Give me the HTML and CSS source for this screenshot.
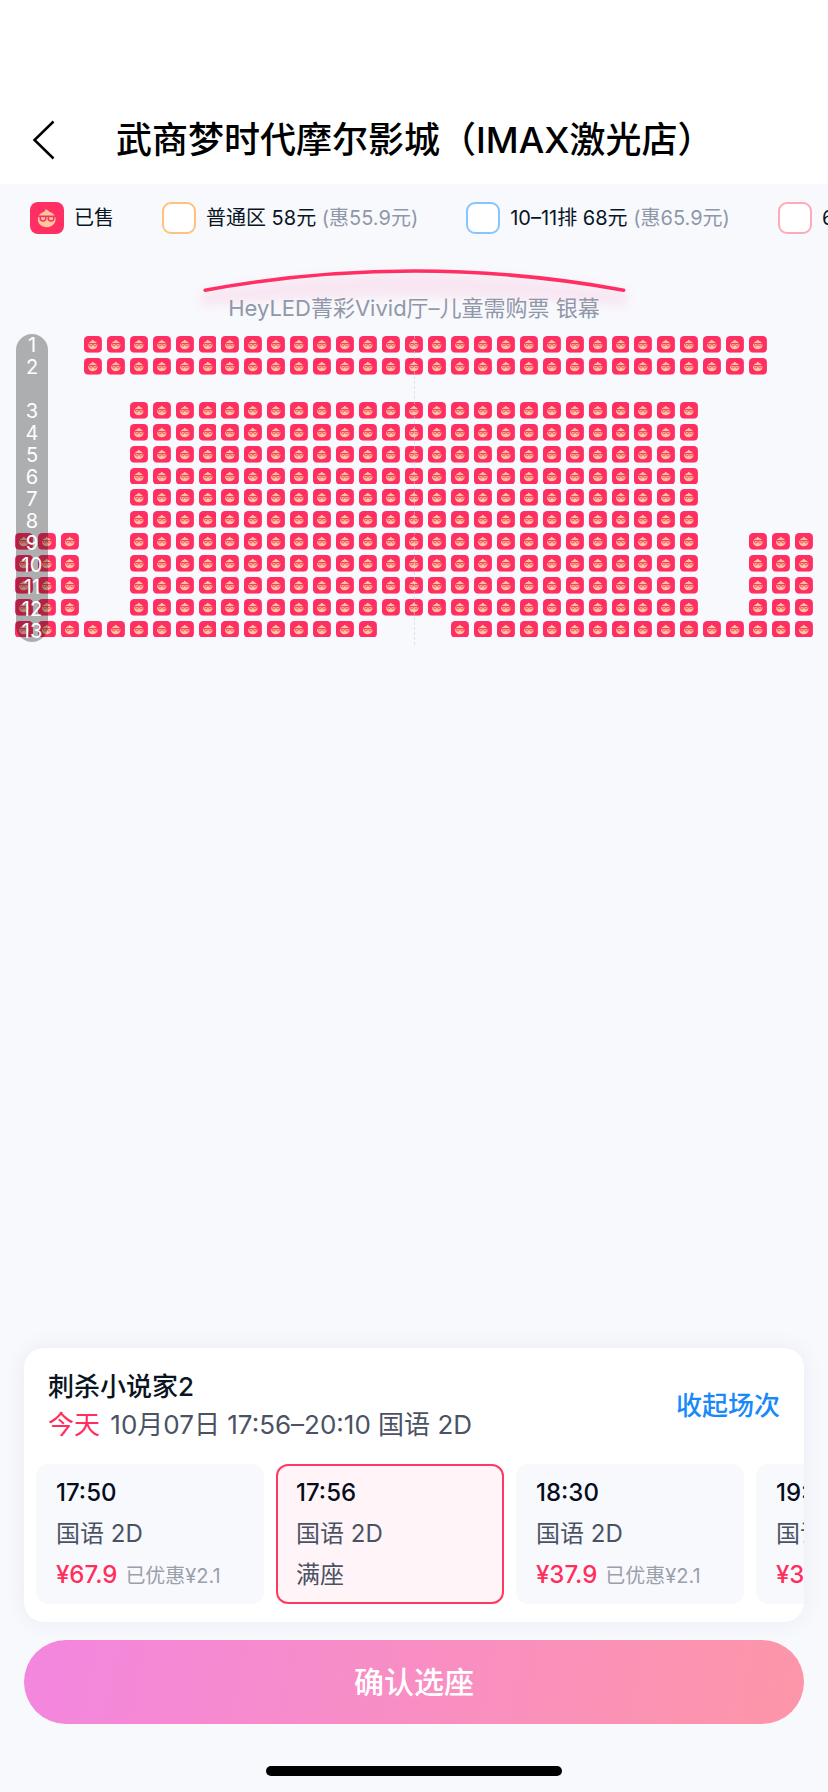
FILE: index.html
```html
<!DOCTYPE html>
<html lang="zh-CN">
<head>
<meta charset="utf-8">
<meta name="viewport" content="width=device-width, initial-scale=1">
<title>武商梦时代摩尔影城（IMAX激光店）</title>
<link rel="stylesheet" href="styles.css">
</head>
<body>
<svg class="defs" aria-hidden="true">
  <symbol id="sold" viewBox="0 0 34 32" preserveAspectRatio="none">
    <rect width="34" height="32" rx="8" fill="#ff2e63"/>
    <path d="M15.400 7.200 Q18.500 7.800 19.300 9.700 A8.900 8 0 1 1 13.400 9.900 Q15.600 9.200 15.400 7.200 Z" fill="#ffc59c"/>
    <path d="M8 14.200 H26 M10.300 14.600 h5.500 v2 q0 2.400 -2.700 2.400 q-2.800 0 -2.800 -2.400 z M18.300 14.600 h5.500 v2 q0 2.400 -2.800 2.400 q-2.700 0 -2.700 -2.400 z" fill="none" stroke="#f4365f" stroke-width="1.500"/>
  </symbol>
</svg>
<div class="page">
  <header class="header">
    <button class="back" type="button" aria-label="返回">
      <svg class="back-icon" viewBox="0 0 24 40"><path d="M21.500 1.500 L2.500 20 L21.500 38.500" fill="none" stroke="#000" stroke-width="2.500"/></svg>
    </button>
    <h1 class="title">武商梦时代摩尔影城（IMAX激光店）</h1>
  </header>

  <ul class="legend">
    <li class="legend-item"><svg class="swatch-sold"><use href="#sold"/></svg><span>已售</span></li>
    <li class="legend-item"><i class="swatch orange"></i><span>普通区 58元 <span class="muted">(惠55.9元)</span></span></li>
    <li class="legend-item"><i class="swatch blue"></i><span>10–11排 68元 <span class="muted">(惠65.9元)</span></span></li>
    <li class="legend-item"><i class="swatch pink"></i><span>6–9排 70元</span></li>
  </ul>

  <main class="hall">
    <div class="screen">
      <svg class="screen-arc" viewBox="0 0 468 60" aria-hidden="true">
        <defs><filter id="soft" x="-10%" y="-50%" width="120%" height="200%"><feGaussianBlur stdDeviation="5"/></filter></defs>
        <path d="M22 31 Q234 -6 446 31 V41 Q446 47 438 46 Q234 28 30 46 Q22 47 22 41 Z" fill="#ff2e63" fill-opacity=".07" filter="url(#soft)"/>
        <path d="M26 30 Q234 -8 442 30" fill="none" stroke="#ff2e63" stroke-width="3.500" stroke-linecap="round"/>
      </svg>
      <p class="screen-name">HeyLED菁彩Vivid厅–儿童需购票 银幕</p>
    </div>
    <div class="map">
      <div class="seats" id="seats"></div>
      <div class="axis"></div>
      <ol class="rows">
        <li>1</li><li>2</li><li class="aisle"></li><li>3</li><li>4</li><li>5</li><li>6</li><li>7</li><li>8</li><li>9</li><li>10</li><li>11</li><li>12</li><li>13</li>
      </ol>
    </div>
  </main>

  <footer class="bottom">
    <section class="card">
      <div class="movie">
        <div>
          <h2 class="movie-name">刺杀小说家2</h2>
          <p class="movie-info"><span class="today">今天</span> 10月07日 17:56–20:10 国语 2D</p>
        </div>
        <button class="toggle" type="button">收起场次</button>
      </div>
      <div class="sessions">
        <button class="session" type="button"><span class="time">17:50</span><span>国语 2D</span><span><b class="price">¥67.9</b><small class="off">已优惠¥2.1</small></span></button>
        <button class="session active" type="button"><span class="time">17:56</span><span>国语 2D</span><span>满座</span></button>
        <button class="session" type="button"><span class="time">18:30</span><span>国语 2D</span><span><b class="price">¥37.9</b><small class="off">已优惠¥2.1</small></span></button>
        <button class="session" type="button"><span class="time">19:10</span><span>国语 2D</span><span><b class="price">¥37.9</b><small class="off">已优惠¥2.1</small></span></button>
      </div>
    </section>
    <button class="confirm" type="button">确认选座</button>
    <div class="home"></div>
  </footer>
</div>
<script src="seats.js"></script>
</body>
</html>
```
FILE: styles.css
```css
* { box-sizing: border-box; margin: 0; padding: 0; }
body {
  background: #f8f9fd;
  color: #0a1524;
  font-family: Inter, "Noto Sans CJK SC", sans-serif;
}
button { font: inherit; color: inherit; background: none; border: 0; text-align: left; cursor: pointer; }
ul, ol { list-style: none; }
.defs { position: absolute; width: 0; height: 0; }
.page { display: flex; flex-direction: column; min-height: 100vh; overflow: hidden; }

.header {
  display: flex;
  align-items: center;
  gap: 50px;
  padding: 96px 32px 0;
  height: 184px;
  background: #fff;
}
.back { display: flex; width: 34px; }
.back-icon { width: 24px; height: 40px; }
.title { font-size: 36px; line-height: 52px; font-weight: 500; color: #000; white-space: nowrap; }

.legend {
  display: flex;
  gap: 48px;
  padding: 18px 30px;
  overflow: hidden;
  font-size: 20px;
  line-height: 32px;
  white-space: nowrap;
}
.legend-item { display: flex; flex: none; align-items: center; gap: 10px; }
.swatch, .swatch-sold { flex: none; width: 34px; height: 32px; }
.swatch { border: 2px solid; border-radius: 9px; background: #fff; }
.orange { border-color: #ffc27d; }
.blue { border-color: #86c5ff; }
.pink { border-color: #ffa9b9; }
.muted { color: #9097a9; }

.hall { flex: 1; padding: 8px 15px 0; }
.screen { display: flex; flex-direction: column; align-items: center; }
.screen-arc { width: 59%; margin-bottom: -28px; }
.screen-name { position: relative; font-size: 22px; line-height: 32px; color: #9097a9; }
.map { position: relative; margin-top: 12px; }
.seats {
  display: grid;
  grid-template-columns: repeat(35, 1fr);
  grid-template-rows: repeat(14, 1fr);
  gap: 5px;
  aspect-ratio: 798 / 301;
}
.seat { display: block; min-width: 0; min-height: 0; }
.seat-icon { display: block; width: 100%; height: 100%; }
.axis {
  position: absolute;
  top: 0;
  bottom: -8px;
  left: 50%;
  border-left: 1px dashed rgba(205, 208, 216, .6);
}
.rows {
  position: absolute;
  top: -2px;
  left: 1px;
  width: 32px;
  border-radius: 16px;
  background: rgba(0, 0, 0, .3);
  color: #fff;
  font-size: 20px;
  line-height: 22px;
  text-align: center;
}
.rows li { height: 22px; }

.bottom { padding: 0 24px 16px; }
.card {
  overflow: hidden;
  padding: 20px 0 18px 12px;
  border-radius: 20px;
  background: #fff;
  box-shadow: 0 0 24px rgba(20, 30, 60, .06);
}
.movie {
  display: flex;
  justify-content: space-between;
  align-items: center;
  padding: 0 24px 0 12px;
  font-size: 26px;
  line-height: 38px;
}
.movie-name { font-size: 26px; font-weight: 500; }
.movie-info { color: #4b5263; }
.today { margin-right: 3px; }
.today, .price { color: #ff2e5b; }
.toggle { font-weight: 500; color: #1989fa; }
.sessions { display: flex; gap: 12px; margin-top: 20px; overflow: hidden; }
.session {
  display: flex;
  flex: none;
  flex-direction: column;
  width: 228px;
  padding: 6px 18px 5px;
  border: 2px solid #f8f9fd;
  border-radius: 12px;
  background: #f8f9fd;
  color: #4b5263;
  font-size: 24px;
  line-height: 41px;
  white-space: nowrap;
}
.session.active { border-color: #ff3a62; background: #fff5f9; }
.time { font-weight: 500; color: #050d1c; }
.price { font-weight: 500; margin-right: 8px; }
.off { font-size: 20px; color: #9b9fab; }
.confirm {
  display: block;
  width: 100%;
  height: 84px;
  margin-top: 18px;
  padding-bottom: 4px;
  border-radius: 42px;
  background: linear-gradient(100deg, #f386df, #fd96a8);
  color: #fff;
  font-size: 30px;
  font-weight: 500;
  text-align: center;
}
.home { width: 38%; height: 10px; margin: 42px auto 0; border-radius: 5px; background: #000; }
```
FILE: seats.js
```javascript
// Each entry: grid line, row label, and the ranges of occupied columns.
const side = [[1, 3], [6, 30], [33, 35]];
const layout = [
  [1, 1, [[4, 33]]],
  [2, 2, [[4, 33]]],
  [4, 3, [[6, 30]]],
  [5, 4, [[6, 30]]],
  [6, 5, [[6, 30]]],
  [7, 6, [[6, 30]]],
  [8, 7, [[6, 30]]],
  [9, 8, [[6, 30]]],
  [10, 9, side],
  [11, 10, side],
  [12, 11, side],
  [13, 12, side],
  [14, 13, [[1, 16], [20, 35]]]
];
const seats = document.getElementById("seats");
for (const [line, row, ranges] of layout) {
  let number = 1;
  for (const [from, to] of ranges) {
    for (let col = from; col <= to; col++) {
      const seat = document.createElement("button");
      seat.type = "button";
      seat.className = "seat";
      seat.disabled = true;
      seat.setAttribute("aria-label", `${row}排${number++}座 已售`);
      seat.style.gridArea = `${line} / ${col}`;
      seat.innerHTML = '<svg class="seat-icon"><use href="#sold"/></svg>';
      seats.append(seat);
    }
  }
}
```
